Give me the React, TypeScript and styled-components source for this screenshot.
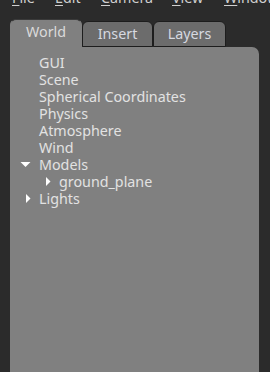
import React from "react";
import styled, { createGlobalStyle } from "styled-components";

const GlobalStyle = createGlobalStyle`
  html, body {
    margin: 0;
    padding: 0;
    background-color: #2b2b2b;
    height: 100%;
    overflow: hidden;
  }
  #root {
    height: 100%;
  }
`;

const Window = styled.div`
  display: flex;
  flex-direction: column;
  height: 372px;
  font-family: "Noto Sans", "DejaVu Sans", sans-serif;
  font-size: 14.3px;
`;

const MenuBar = styled.div`
  display: flex;
  align-items: flex-end;
  height: 6px;
  overflow: hidden;
  padding-left: 12px;
  color: #cfcfcf;
`;

const MenuItem = styled.span<{ $width: number }>`
  flex: none;
  width: ${(p) => p.$width}px;
  line-height: 17px;
  height: 17px;
  & u {
    text-decoration-thickness: 1px;
    text-underline-offset: 2px;
  }
`;

const TabBar = styled.div`
  display: flex;
  align-items: flex-end;
  margin-top: 13px;
  padding-left: 10px;
  height: 28px;
`;

const Tab = styled.div<{ $active?: boolean; $width: number }>`
  box-sizing: border-box;
  display: flex;
  align-items: center;
  justify-content: center;
  line-height: 18px;
  color: ${(p) => (p.$active ? "#dadada" : "#d6d9e0")};
  background-color: ${(p) => (p.$active ? "#808080" : "#6c6c6c")};
  border: 1px solid ${(p) => (p.$active ? "#808080" : "#1d1d1d")};
  border-top-color: ${(p) => (p.$active ? "#3a3a3a" : "#1d1d1d")};
  border-radius: 6px 6px 0 0;
  height: ${(p) => (p.$active ? 29 : 26)}px;
  width: ${(p) => p.$width}px;
  padding-bottom: ${(p) => (p.$active ? 3 : 1)}px;
  margin-bottom: ${(p) => (p.$active ? -1 : 0)}px;
  position: relative;
  z-index: ${(p) => (p.$active ? 1 : 0)};
`;

const Panel = styled.div`
  flex: 1;
  margin: 0 11px 0 10px;
  background-color: #808080;
  border-top-right-radius: 7px;
  padding-top: 7px;
`;

const TreeRow = styled.div<{ $depth: number }>`
  display: flex;
  align-items: center;
  height: 17px;
  line-height: 17px;
  padding-left: ${(p) => 10 + p.$depth * 20}px;
  color: #e2e2e2;
  white-space: nowrap;
`;

const Expander = styled.span`
  display: inline-flex;
  width: 11px;
  height: 11px;
  margin-right: 8px;
  flex: none;
`;

type Node = { label: string; depth: number; arrow?: "down" | "right" };

const nodes: Node[] = [
  { label: "GUI", depth: 0 },
  { label: "Scene", depth: 0 },
  { label: "Spherical Coordinates", depth: 0 },
  { label: "Physics", depth: 0 },
  { label: "Atmosphere", depth: 0 },
  { label: "Wind", depth: 0 },
  { label: "Models", depth: 0, arrow: "down" },
  { label: "ground_plane", depth: 1, arrow: "right" },
  { label: "Lights", depth: 0, arrow: "right" },
];

function Arrow({ dir }: { dir?: "down" | "right" }) {
  return (
    <Expander>
      {dir && (
        <svg width="11" height="11" viewBox="0 0 11 11">
          {dir === "down" ? (
            <polygon points="0.5,3 10.5,3 5.5,8" fill="#ffffff" />
          ) : (
            <polygon points="6,1 10.5,5.5 6,10" fill="#ffffff" />
          )}
        </svg>
      )}
    </Expander>
  );
}

const menus = [
  { first: "F", rest: "ile", width: 43 },
  { first: "E", rest: "dit", width: 46 },
  { first: "C", rest: "amera", width: 71 },
  { first: "V", rest: "iew", width: 52 },
  { first: "W", rest: "indow", width: 60 },
];

const tabs = [
  { label: "World", width: 72, active: true },
  { label: "Insert", width: 71 },
  { label: "Layers", width: 73 },
];

export default function App() {
  return (
    <>
      <GlobalStyle />
      <Window>
        <MenuBar>
          {menus.map((m) => (
            <MenuItem key={m.first} $width={m.width}>
              <u>{m.first}</u>
              {m.rest}
            </MenuItem>
          ))}
        </MenuBar>
        <TabBar>
          {tabs.map((t) => (
            <Tab key={t.label} $active={t.active} $width={t.width}>
              {t.label}
            </Tab>
          ))}
        </TabBar>
        <Panel>
          {nodes.map((n) => (
            <TreeRow key={n.label} $depth={n.depth}>
              <Arrow dir={n.arrow} />
              {n.label}
            </TreeRow>
          ))}
        </Panel>
      </Window>
    </>
  );
}
